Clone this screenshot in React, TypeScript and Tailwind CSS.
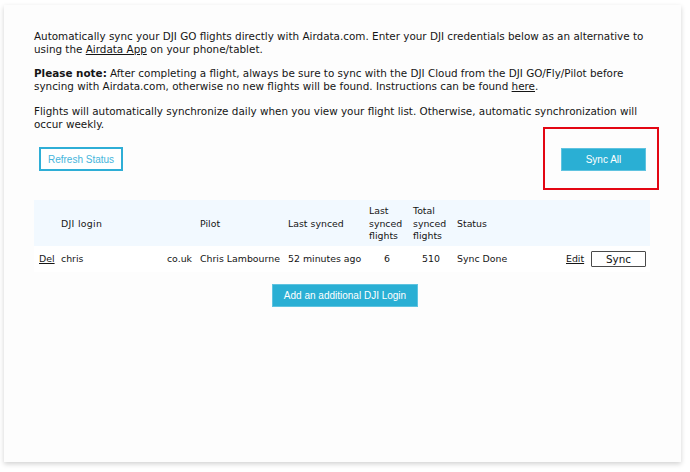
const body = "font-['DejaVu_Sans',Verdana,sans-serif]"
const btnFont = "font-['Liberation_Sans',Arial,sans-serif]"

function Intro() {
    return (
        <div className="flex flex-col gap-[12px] text-[10.4px] leading-[12.7px] text-[#151515]">
            <p>
                Automatically sync your DJI GO flights directly with Airdata.com. Enter your DJI credentials below as an
                alternative to using the <span className="underline">Airdata App</span> on your phone/tablet.
            </p>
            <p>
                <b>Please note:</b> After completing a flight, always be sure to sync with the DJI Cloud from the DJI
                GO/Fly/Pilot before syncing with Airdata.com, otherwise no new flights will be found. Instructions can be
                found <span className="underline">here</span>.
            </p>
            <p>
                Flights will automatically synchronize daily when you view your flight list. Otherwise, automatic
                synchronization will occur weekly.
            </p>
        </div>
    )
}

function AccountsTable() {
    const th = "px-[4px] pt-[5px] pb-[3px] text-left align-middle font-normal"
    const td = "px-[4px] h-[26px] align-middle"
    return (
        <table className="w-[616px] table-fixed border-collapse text-[9.4px] leading-[12.5px] text-[#151515]">
            <colgroup>
                <col className="w-[23px]" />
                <col className="w-[139px]" />
                <col className="w-[88px]" />
                <col className="w-[81px]" />
                <col className="w-[44px]" />
                <col className="w-[44px]" />
                <col className="w-[109px]" />
                <col className="w-[25px]" />
                <col className="w-[63px]" />
            </colgroup>
            <thead>
                <tr className="h-[46px] bg-[#f2f9ff]">
                    <th className={th}></th>
                    <th className={th + " tracking-[0.3px]"}>DJI login</th>
                    <th className={th}>Pilot</th>
                    <th className={th}>Last synced</th>
                    <th className={th}>Last synced flights</th>
                    <th className={th}>Total synced flights</th>
                    <th className={th}>Status</th>
                    <th className={th}></th>
                    <th className={th}></th>
                </tr>
            </thead>
            <tbody>
                <tr className="bg-white">
                    <td className={td + " pl-[5px]"}>
                        <span className="underline">Del</span>
                    </td>
                    <td className={td}>
                        <div className="flex justify-between">
                            <span>chris</span>
                            <span>co.uk</span>
                        </div>
                    </td>
                    <td className={td + " whitespace-nowrap"}>Chris Lambourne</td>
                    <td className={td + " whitespace-nowrap"}>52 minutes ago</td>
                    <td className={td + " text-center"}>6</td>
                    <td className={td + " text-center"}>510</td>
                    <td className={td}>Sync Done</td>
                    <td className={td + " pl-[4px]"}>
                        <span className="underline">Edit</span>
                    </td>
                    <td className={td}>
                        <button
                            type="button"
                            className="flex h-[16px] w-[55px] items-center justify-center rounded-[1px] border border-[#4a4a4a] bg-white text-[10.4px] text-[#111]"
                        >
                            Sync
                        </button>
                    </td>
                </tr>
            </tbody>
        </table>
    )
}

export default function App() {
    return (
        <div className={"min-h-[472px] w-[690px] bg-white pl-[4px] pt-[5px] " + body}>
            <div className="h-[457px] w-[677px] bg-[#fdfdfd] pl-[30px] pt-[25px] shadow-[0_2px_5px_rgba(0,0,0,0.18)]">
                <div className="w-[616px]">
                    <Intro />

                    <div className={"mt-[17px] flex items-start justify-between px-[5px] " + btnFont}>
                        <button
                            type="button"
                            className="flex h-[24px] w-[84px] items-center justify-center border-2 border-[#2eaed6] bg-white text-[10px] text-[#46b5dc]"
                        >
                            Refresh Status
                        </button>
                        <div className="relative mr-[-1px] mt-[1px]">
                            <button
                                type="button"
                                className="flex h-[23px] w-[85px] items-center justify-center border border-[#5fc3e0] bg-[#2aafd4] text-[10px] text-white"
                            >
                                Sync All
                            </button>
                            <div className="pointer-events-none absolute left-[-18px] top-[-21px] h-[63px] w-[116px] border-2 border-[#e30613]" />
                        </div>
                    </div>

                    <div className="mt-[29px]">
                        <AccountsTable />
                    </div>

                    <div className={"mt-[12px] flex justify-center pl-[6px] " + btnFont}>
                        <button
                            type="button"
                            className="flex h-[23px] w-[146px] items-center justify-center border border-[#5fc3e0] bg-[#2aafd4] text-[10px] text-white"
                        >
                            Add an additional DJI Login
                        </button>
                    </div>
                </div>
            </div>
        </div>
    )
}
